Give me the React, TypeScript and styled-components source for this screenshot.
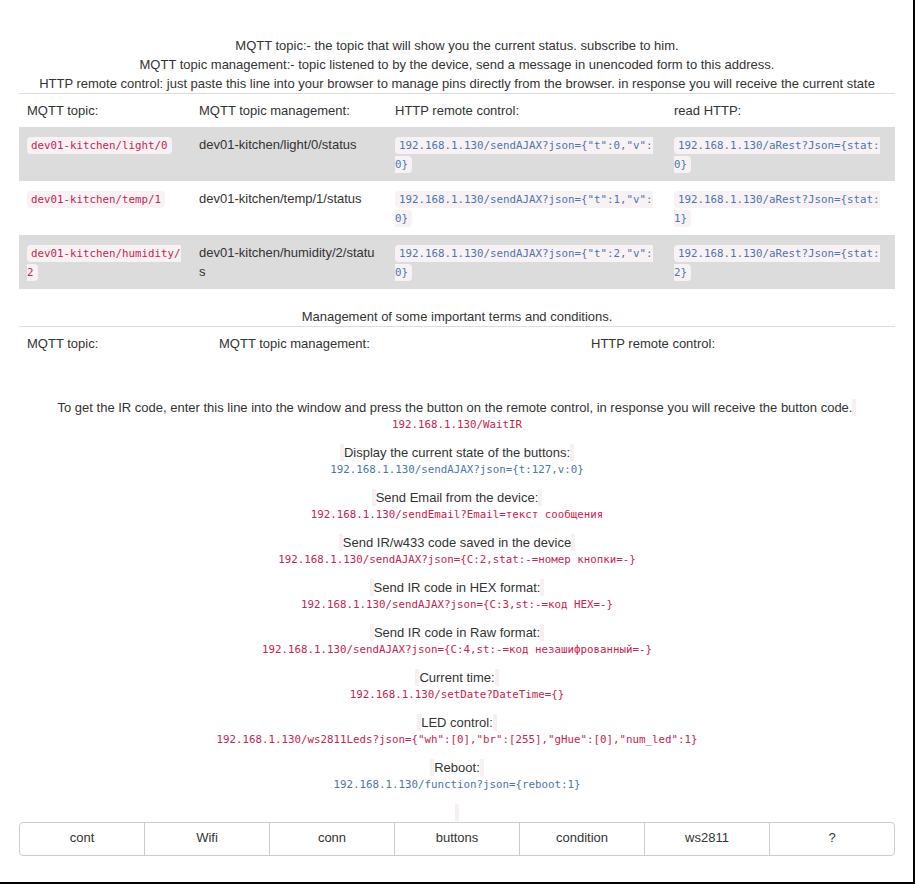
import React from 'react';
import styled, { createGlobalStyle } from 'styled-components';

const GlobalStyle = createGlobalStyle`
  html { background: #000; }
  body {
    margin: 0;
    background: #000;
    font-family: "Liberation Sans", Arial, sans-serif;
    font-size: 13px;
    color: #333;
  }
`;

const Page = styled.div`
  width: 913px;
  height: 882px;
  box-sizing: border-box;
  background: #fff;
  padding: 36px 18px 0 19px;
  overflow: hidden;
`;

const Intro = styled.div`
  text-align: center;
  line-height: 19px;
`;

const SectionTitle = styled.div`
  text-align: center;
  line-height: 19px;
`;

const Table = styled.table<{ $mb: number }>`
  width: 100%;
  border-collapse: collapse;
  table-layout: fixed;
  margin-bottom: ${(p) => p.$mb}px;
`;

const HeadCell = styled.th<{ $w: number }>`
  box-sizing: border-box;
  width: ${(p) => p.$w}px;
  text-align: left;
  font-weight: normal;
  padding: 7px 8px;
  line-height: 19px;
  border-top: 1px solid #ddd;
  vertical-align: top;
`;

const Row = styled.tr<{ $shade: boolean }>`
  background: ${(p) => (p.$shade ? '#dcdcdc' : '#fff')};
`;

const Cell = styled.td<{ $pr?: number }>`
  box-sizing: border-box;
  padding: 8px ${(p) => p.$pr ?? 8}px 8px 8px;
  line-height: 19px;
  vertical-align: top;
  word-break: break-all;
`;

const Chip = styled.code<{ $tone: 'red' | 'blue' }>`
  font-family: "DejaVu Sans Mono", "Liberation Mono", monospace;
  font-size: 10.8px;
  line-height: 10px;
  padding: 2px 4px;
  border-radius: 4px;
  background: #f9f2f4;
  color: ${(p) => (p.$tone === 'red' ? '#c7254e' : '#4a76b0')};
`;

const IRList = styled.div`
  display: flex;
  flex-direction: column;
  align-items: center;
  gap: 10px;
`;

const Block = styled.div`
  display: flex;
  flex-direction: column;
  align-items: center;
`;

const Label = styled.div`
  display: flex;
  align-items: stretch;
  height: 19px;
  line-height: 19px;
`;

const Mark = styled.span`
  width: 4px;
  margin: 1px 0;
  background: #f7f0f3;
`;

const Command = styled.div<{ $tone: 'red' | 'blue' }>`
  font-family: "DejaVu Sans Mono", "Liberation Mono", monospace;
  font-size: 10.8px;
  line-height: 16px;
  white-space: nowrap;
  color: ${(p) => (p.$tone === 'red' ? '#c7254e' : '#4a76b0')};
`;

const ButtonGroup = styled.div`
  display: flex;
`;

const GroupButton = styled.button`
  flex: 1 1 0;
  min-width: 0;
  margin: 0 0 0 -1px;
  padding: 5px 12px 8px;
  border: 1px solid #ccc;
  background: #fff;
  color: #333;
  font-family: inherit;
  font-size: 13px;
  line-height: 19px;
  border-radius: 0;
  &:first-child {
    margin-left: 0;
    border-radius: 4px 0 0 4px;
  }
  &:last-child {
    border-radius: 0 4px 4px 0;
  }
`;

const rows = [
  { n: 0, name: 'light' },
  { n: 1, name: 'temp' },
  { n: 2, name: 'humidity' },
];

type Tone = 'red' | 'blue';
const ir: { label: string; left: boolean; code: string; tone: Tone }[] = [
  {
    label:
      'To get the IR code, enter this line into the window and press the button on the remote control, in response you will receive the button code.',
    left: false,
    code: '192.168.1.130/WaitIR',
    tone: 'red',
  },
  { label: 'Display the current state of the buttons:', left: true, code: '192.168.1.130/sendAJAX?json={t:127,v:0}', tone: 'blue' },
  { label: 'Send Email from the device:', left: true, code: '192.168.1.130/sendEmail?Email=текст сообщения', tone: 'red' },
  { label: 'Send IR/w433 code saved in the device', left: true, code: '192.168.1.130/sendAJAX?json={C:2,stat:-=номер кнопки=-}', tone: 'red' },
  { label: 'Send IR code in HEX format:', left: true, code: '192.168.1.130/sendAJAX?json={C:3,st:-=код HEX=-}', tone: 'red' },
  { label: 'Send IR code in Raw format:', left: true, code: '192.168.1.130/sendAJAX?json={C:4,st:-=код незашифрованный=-}', tone: 'red' },
  { label: 'Current time:', left: true, code: '192.168.1.130/setDate?DateTime={}', tone: 'red' },
  { label: 'LED control:', left: true, code: '192.168.1.130/ws2811Leds?json={"wh":[0],"br":[255],"gHue":[0],"num_led":1}', tone: 'red' },
  { label: 'Reboot:', left: true, code: '192.168.1.130/function?json={reboot:1}', tone: 'blue' },
];

const buttons = ['cont', 'Wifi', 'conn', 'buttons', 'condition', 'ws2811', '?'];

export default function App() {
  return (
    <>
      <GlobalStyle />
      <Page>
        <Intro>
          <div>MQTT topic:- the topic that will show you the current status. subscribe to him.</div>
          <div>MQTT topic management:- topic listened to by the device, send a message in unencoded form to this address.</div>
          <div>
            HTTP remote control: just paste this line into your browser to manage pins directly from the browser. in response you will receive the current state
          </div>
        </Intro>
        <Table $mb={18}>
          <thead>
            <tr>
              <HeadCell $w={172}>MQTT topic:</HeadCell>
              <HeadCell $w={196}>MQTT topic management:</HeadCell>
              <HeadCell $w={279}>HTTP remote control:</HeadCell>
              <HeadCell $w={229}>read HTTP:</HeadCell>
            </tr>
          </thead>
          <tbody>
            {rows.map((r) => (
              <Row key={r.n} $shade={r.n !== 1}>
                <Cell>
                  <Chip $tone="red">{`dev01-kitchen/${r.name}/${r.n}`}</Chip>
                </Cell>
                <Cell>{`dev01-kitchen/${r.name}/${r.n}/status`}</Cell>
                <Cell $pr={10}>
                  <Chip $tone="blue">{`192.168.1.130/sendAJAX?json={"t":${r.n},"v":0}`}</Chip>
                </Cell>
                <Cell $pr={13}>
                  <Chip $tone="blue">{`192.168.1.130/aRest?Json={stat:${r.n}}`}</Chip>
                </Cell>
              </Row>
            ))}
          </tbody>
        </Table>
        <SectionTitle>Management of some important terms and conditions.</SectionTitle>
        <Table $mb={38}>
          <thead>
            <tr>
              <HeadCell $w={192}>MQTT topic:</HeadCell>
              <HeadCell $w={372}>MQTT topic management:</HeadCell>
              <HeadCell $w={312}>HTTP remote control:</HeadCell>
            </tr>
          </thead>
        </Table>
        <IRList>
          {ir.map((b) => (
            <Block key={b.code}>
              <Label>
                {b.left && <Mark />}
                <span>{b.label}</span>
                <Mark />
              </Label>
              <Command $tone={b.tone}>{b.code}</Command>
            </Block>
          ))}
          <Block>
            <Label>
              <Mark />
            </Label>
          </Block>
        </IRList>
        <ButtonGroup>
          {buttons.map((b) => (
            <GroupButton key={b}>{b}</GroupButton>
          ))}
        </ButtonGroup>
      </Page>
    </>
  );
}
